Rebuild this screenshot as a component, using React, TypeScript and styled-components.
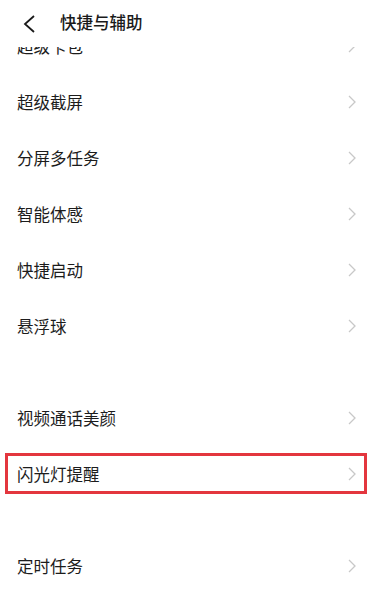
import React from 'react'
import styled, { createGlobalStyle } from 'styled-components'

const GlobalStyle = createGlobalStyle`
  html, body {
    margin: 0;
    padding: 0;
    background: #ffffff;
  }
  body {
    font-family: 'Noto Sans CJK SC', 'Noto Sans', sans-serif;
    color: #1c1c1c;
  }
`

const Screen = styled.div`
  width: 376px;
  height: 611px;
  overflow: hidden;
  background: #ffffff;
  display: flex;
  flex-direction: column;
`

const TopBar = styled.div`
  position: relative;
  z-index: 2;
  height: 47px;
  flex-shrink: 0;
  background: #ffffff;
  display: flex;
  align-items: center;
  padding-left: 23px;
  gap: 24px;
`

const Title = styled.div`
  font-size: 16.5px;
  font-weight: 500;
  line-height: 1;
  color: #1a1a1a;
  margin-top: -2px;
`

const List = styled.div`
  margin-top: -29px;
  display: flex;
  flex-direction: column;
`

const Section = styled.div<{ gapBefore?: boolean }>`
  display: flex;
  flex-direction: column;
  margin-top: ${(p) => (p.gapBefore ? '36px' : '0')};
`

const Row = styled.div`
  position: relative;
  height: 56px;
  display: flex;
  align-items: center;
  justify-content: space-between;
  padding: 0 19px 0 17px;
`

const Label = styled.span`
  font-size: 16.5px;
  line-height: 1;
  color: #1c1c1c;
`

const Highlight = styled.div`
  position: absolute;
  left: 5px;
  right: 9px;
  top: 7px;
  bottom: 8px;
  border: 3px solid #e3363e;
  pointer-events: none;
`

function BackIcon() {
  return (
    <svg width="13" height="18" viewBox="0 0 13 18">
      <polyline points="11,1 2,9 11,17" fill="none" stroke="#1a1a1a" strokeWidth="1.8" strokeLinejoin="miter" />
    </svg>
  )
}

function Chevron() {
  return (
    <svg width="10" height="14" viewBox="0 0 10 14">
      <polyline points="2,1 8,7 2,13" fill="none" stroke="#c8c8c8" strokeWidth="1.3" />
    </svg>
  )
}

type Item = { label: string; marked?: boolean }

const sections: Item[][] = [
  [{ label: '超级卡包' }, { label: '超级截屏' }, { label: '分屏多任务' }, { label: '智能体感' }, { label: '快捷启动' }, { label: '悬浮球' }],
  [{ label: '视频通话美颜' }, { label: '闪光灯提醒', marked: true }],
  [{ label: '定时任务' }],
]

export default function App() {
  return (
    <Screen>
      <GlobalStyle />
      <TopBar>
        <BackIcon />
        <Title>快捷与辅助</Title>
      </TopBar>
      <List>
        {sections.map((items, i) => (
          <Section key={i} gapBefore={i > 0}>
            {items.map((item) => (
              <Row key={item.label}>
                <Label>{item.label}</Label>
                <Chevron />
                {item.marked && <Highlight />}
              </Row>
            ))}
          </Section>
        ))}
      </List>
    </Screen>
  )
}
